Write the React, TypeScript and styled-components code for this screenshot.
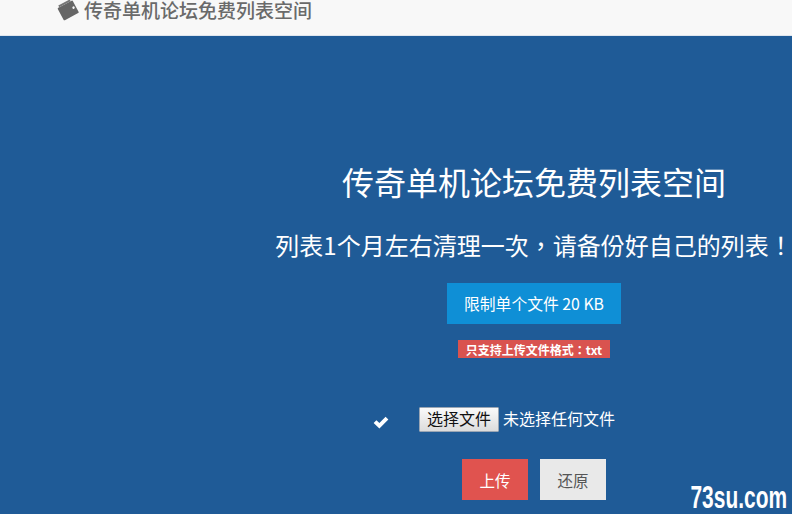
import React from "react";
import styled, { createGlobalStyle } from "styled-components";

const Global = createGlobalStyle`
  html, body { margin: 0; padding: 0; height: 100%; }
  body { background: #1f5b97; font-family: "Noto Sans CJK SC", "Open Sans", sans-serif; overflow: hidden; }
  #root { height: 100%; }
`;

const Page = styled.div`
  height: 514px;
  display: flex;
  flex-direction: column;
  position: relative;
  overflow: hidden;
`;

const Navbar = styled.header`
  height: 36px;
  box-sizing: border-box;
  background: #f8f8f8;
  border-bottom: 1px solid #dfe6ee;
  display: flex;
  align-items: center;
  gap: 5px;
  padding: 0 0 15px 57px;
`;

const Brand = styled.span`
  font-size: 19px;
  line-height: 20px;
  font-weight: 500;
  color: #6a6a6a;
  white-space: nowrap;
`;

const Main = styled.main`
  flex: 1;
  display: flex;
  flex-direction: column;
  align-items: center;
  padding: 122px 0 0 276px;
`;

const Title = styled.h1`
  margin: 0;
  font-size: 32px;
  line-height: 46px;
  font-weight: 400;
  color: #fff;
  white-space: nowrap;
`;

const Subtitle = styled.h2`
  margin: 24px 0 0;
  font-family: "Noto Sans CJK TC", "Noto Sans CJK SC", sans-serif;
  font-size: 24px;
  line-height: 34px;
  font-weight: 400;
  color: #fff;
  white-space: nowrap;
`;

const Limit = styled.div`
  margin-top: 21px;
  width: 174px;
  height: 41px;
  background: #0f8fd6;
  color: #fff;
  font-size: 15.8px;
  display: flex;
  align-items: center;
  justify-content: center;
  white-space: nowrap;
`;

const Tag = styled.span`
  margin-top: 16px;
  width: 152px;
  height: 18px;
  background: #d9534f;
  color: #fff;
  font-family: "Noto Sans CJK TC", "Noto Sans CJK SC", sans-serif;
  font-size: 12px;
  font-weight: 700;
  display: flex;
  align-items: center;
  justify-content: center;
  white-space: nowrap;
`;

const FileRow = styled.div`
  margin-top: 49px;
  height: 25px;
  width: 100%;
  display: flex;
  align-items: center;
  padding-left: 97px;
  box-sizing: border-box;
`;

const Check = styled.svg`
  width: 16px;
  height: 13px;
  margin: 6px 30px 0 0;
  fill: #fff;
`;

const FileButton = styled.button`
  width: 80px;
  height: 25px;
  padding: 0 0 4px;
  box-sizing: border-box;
  border: 1px solid #9aa6b4;
  border-radius: 1px;
  background: linear-gradient(#fafafa, #dcdcdc);
  color: #111;
  font: 400 16px/20px "Noto Sans CJK SC", sans-serif;
`;

const FileHint = styled.span`
  margin: 0 0 4px 4px;
  color: #fff;
  font-size: 16px;
  line-height: 20px;
  white-space: nowrap;
`;

const Actions = styled.div`
  margin-top: 27px;
  display: flex;
  gap: 12px;
`;

const Action = styled.button<{ $primary?: boolean }>`
  width: 66px;
  height: 41px;
  padding: 0;
  border: none;
  background: ${(p) => (p.$primary ? "#e0534f" : "#e9e9e9")};
  color: ${(p) => (p.$primary ? "#fff" : "#555")};
  font: 400 15.5px "Noto Sans CJK SC", sans-serif;
`;

const Watermark = styled.span`
  position: absolute;
  right: 5px;
  bottom: -1px;
  color: #fff;
  font: 700 31px/34px "Liberation Sans", sans-serif;
  transform: scaleX(0.675);
  transform-origin: right center;
`;

export default function App() {
  return (
    <Page>
      <Global />
      <Navbar>
        <svg width="22" height="22" viewBox="0 0 22 22">
          <g transform="rotate(-28 11 11)" fill="#666">
            <rect x="2.5" y="4.5" width="17" height="14" rx="1" />
            <rect x="4.5" y="2.5" width="13" height="2" fill="#777" />
            <circle cx="17" cy="11.5" r="1.2" fill="#f8f8f8" />
          </g>
        </svg>
        <Brand>传奇单机论坛免费列表空间</Brand>
      </Navbar>
      <Main>
        <Title>传奇单机论坛免费列表空间</Title>
        <Subtitle>列表1个月左右清理一次，请备份好自己的列表！</Subtitle>
        <Limit>限制单个文件 20 KB</Limit>
        <Tag>只支持上传文件格式：txt</Tag>
        <FileRow>
          <Check viewBox="0 0 15 12">
            <path d="M0.6 6.5 L3.2 3.8 L6 6.4 L11.8 0.6 L14.4 3.2 L6 11.6 Z" />
          </Check>
          <FileButton type="button">选择文件</FileButton>
          <FileHint>未选择任何文件</FileHint>
        </FileRow>
        <Actions>
          <Action $primary type="button">上传</Action>
          <Action type="button">还原</Action>
        </Actions>
      </Main>
      <Watermark>73su.com</Watermark>
    </Page>
  );
}
